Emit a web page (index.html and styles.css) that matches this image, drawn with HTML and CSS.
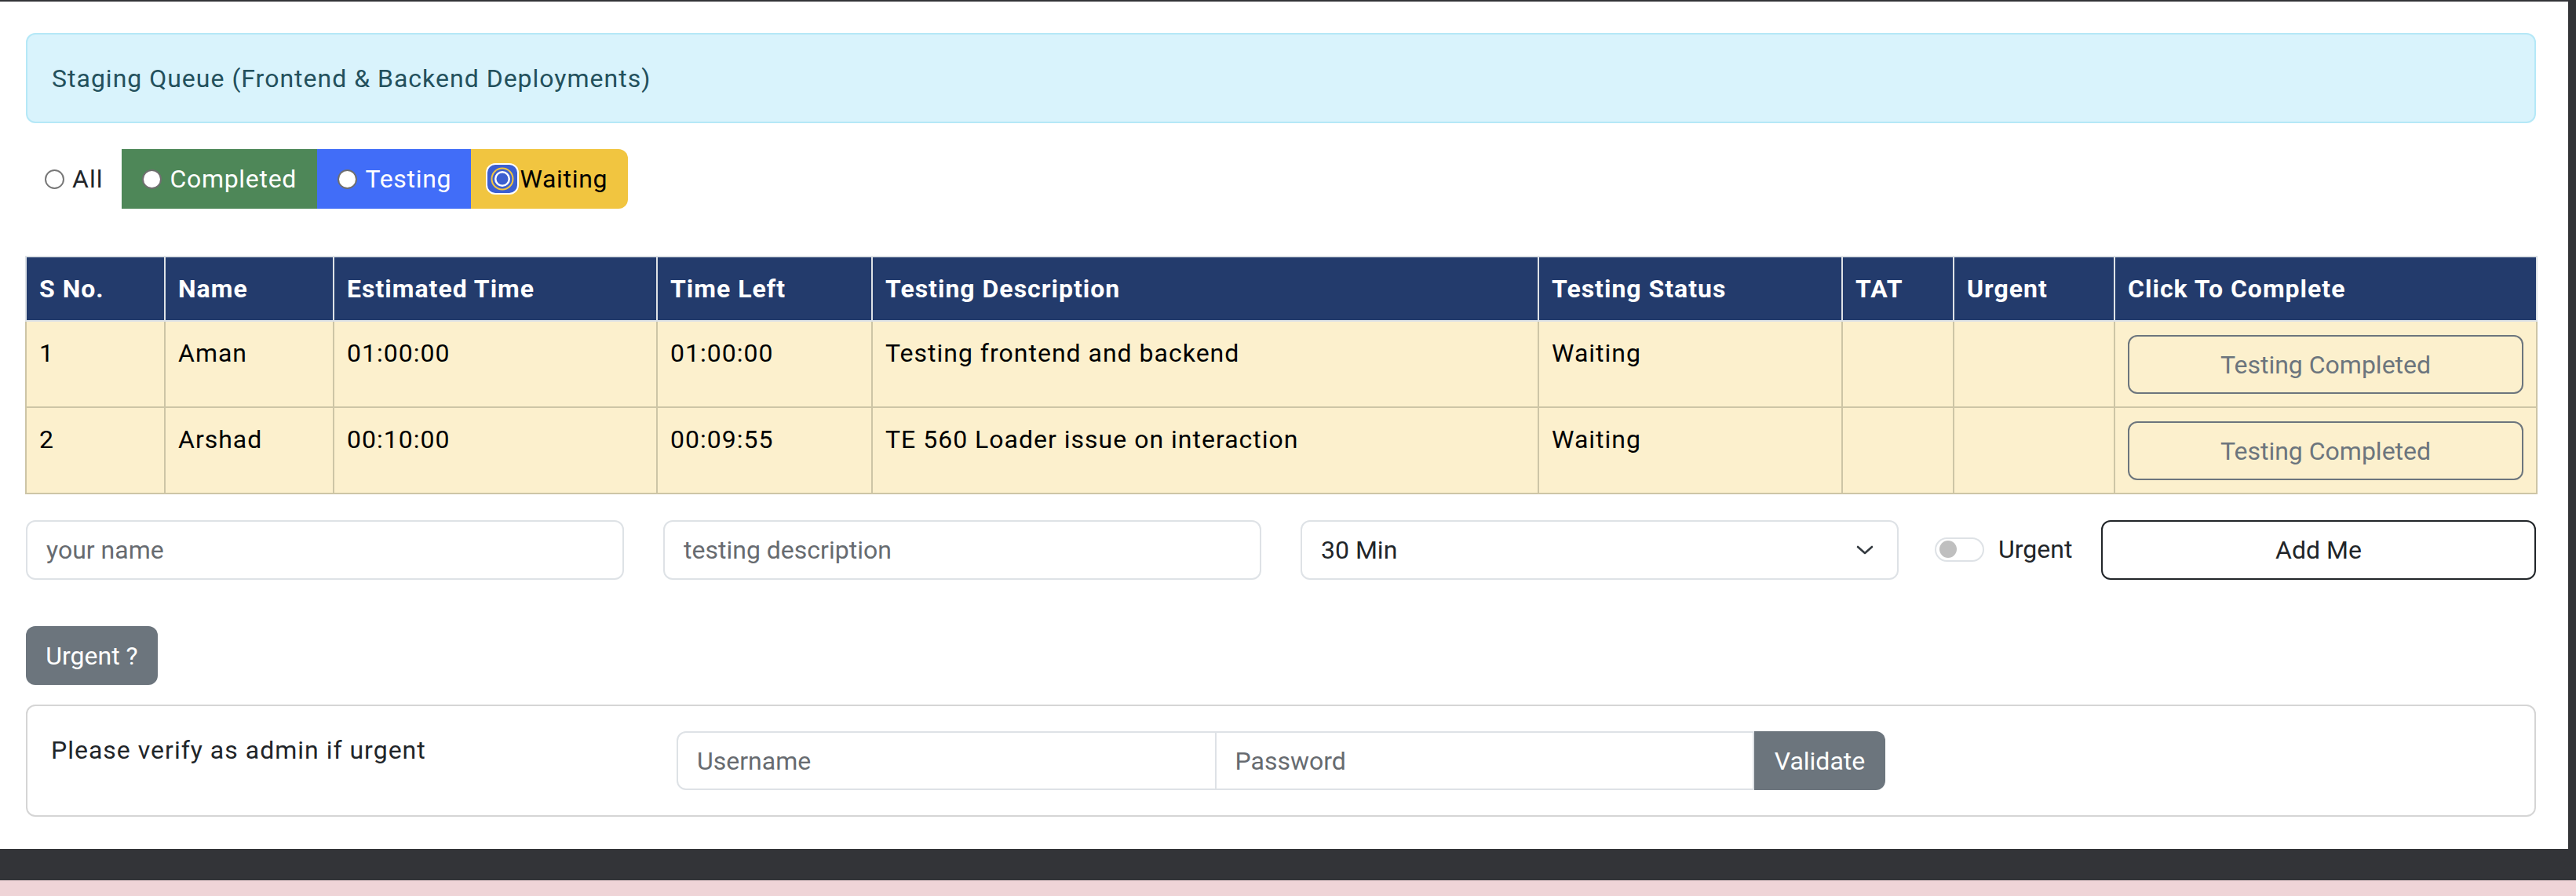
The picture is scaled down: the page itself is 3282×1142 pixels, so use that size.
FILE: index.html
```html
<!DOCTYPE html>
<html lang="en">
<head>
<meta charset="utf-8">
<title>Staging Queue</title>
<link rel="stylesheet" href="styles.css">
</head>
<body>
<div class="screen">
  <div class="page">
    <div class="alert">Staging Queue (Frontend &amp; Backend Deployments)</div>

    <div class="filters">
      <label class="opt opt-all"><span class="radio"></span>All</label>
      <label class="opt opt-completed"><span class="radio filled"></span>Completed</label>
      <label class="opt opt-testing"><span class="radio filled"></span>Testing</label>
      <label class="opt opt-waiting"><svg class="radio-checked" width="42" height="40" viewBox="0 0 42 40"><rect x="0" y="0" width="42" height="40" rx="12" fill="#ffffff"/><rect x="2" y="2" width="38" height="36" rx="10" fill="#3c5fd0"/><circle cx="21" cy="20" r="14.5" fill="#f1c540"/><circle cx="21" cy="20" r="12.5" fill="#3c5fd0"/><circle cx="21" cy="20" r="10" fill="#ffffff"/><circle cx="21" cy="20" r="7.5" fill="#3c5fd0"/></svg>Waiting</label>
    </div>

    <table class="queue">
      <colgroup>
        <col class="c-sno"><col class="c-name"><col class="c-est"><col class="c-left"><col class="c-desc"><col class="c-status"><col class="c-tat"><col class="c-urgent"><col class="c-action">
      </colgroup>
      <thead>
        <tr>
          <th>S No.</th><th>Name</th><th>Estimated Time</th><th>Time Left</th><th>Testing Description</th><th>Testing Status</th><th>TAT</th><th>Urgent</th><th>Click To Complete</th>
        </tr>
      </thead>
      <tbody>
        <tr>
          <td>1</td><td>Aman</td><td>01:00:00</td><td>01:00:00</td><td>Testing frontend and backend</td><td>Waiting</td><td></td><td></td>
          <td><button class="btn-complete">Testing Completed</button></td>
        </tr>
        <tr>
          <td>2</td><td>Arshad</td><td>00:10:00</td><td>00:09:55</td><td>TE 560 Loader issue on interaction</td><td>Waiting</td><td></td><td></td>
          <td><button class="btn-complete">Testing Completed</button></td>
        </tr>
      </tbody>
    </table>

    <div class="entry">
      <input class="field" type="text" placeholder="your name">
      <input class="field" type="text" placeholder="testing description">
      <div class="field select"><span>30 Min</span><svg width="22" height="12" viewBox="0 0 22 12"><polyline points="2,2 11,10 20,2" fill="none" stroke="#343a40" stroke-width="2.6" stroke-linecap="round" stroke-linejoin="round"/></svg></div>
      <div class="entry-last">
        <label class="switch-wrap"><span class="switch"><span class="knob"></span></span>Urgent</label>
        <button class="btn-add">Add Me</button>
      </div>
    </div>

    <button class="btn-urgent">Urgent ?</button>

    <div class="verify">
      <div class="verify-text">Please verify as admin if urgent</div>
      <div class="input-group">
        <input class="ig-field ig-first" type="text" placeholder="Username">
        <input class="ig-field" type="password" placeholder="Password">
        <button class="btn-validate">Validate</button>
      </div>
    </div>
  </div>
  <div class="pink-strip"></div>
</div>
</body>
</html>
```

FILE: styles.css
```css
* { box-sizing: border-box; }

html, body {
  margin: 0;
  padding: 0;
}

body {
  background: #333438;
  font-family: Roboto, "Liberation Sans", Arial, sans-serif;
  font-size: 32px;
  line-height: 48px;
  letter-spacing: 1px;
  color: #212529;
  width: 3282px;
  height: 1142px;
  overflow: hidden;
}

.screen {
  width: 3282px;
  height: 1142px;
  padding-top: 2px;
}

.page {
  width: 3272px;
  height: 1080px;
  background: #ffffff;
  padding: 40px 41px 0 33px;
}

.pink-strip {
  margin-top: 40px;
  height: 20px;
  background: #efd4d7;
}

/* Alert */
.alert {
  height: 115px;
  background: #d9f3fc;
  border: 2px solid #b5e8f7;
  border-radius: 12px;
  color: #23505c;
  padding: 0 31px;
  display: flex;
  align-items: center;
}

/* Filters */
.filters {
  margin-top: 33px;
  height: 76px;
  display: flex;
  align-items: stretch;
}

.opt {
  display: flex;
  align-items: center;
  gap: 10px;
  padding: 0 26px;
  white-space: nowrap;
}

.opt-all {
  padding: 0 24px 0 24px;
  color: #212529;
}

.opt-completed {
  background: #4e8758;
  color: #ffffff;
  width: 249px;
  letter-spacing: 0.7px;
}

.opt-testing {
  background: #416df8;
  color: #ffffff;
  width: 196px;
  letter-spacing: 0.7px;
}

.opt-waiting {
  background: #f1c540;
  color: #000000;
  width: 200px;
  border-radius: 0 12px 12px 0;
  padding-left: 19px;
  gap: 1px;
  letter-spacing: 0.7px;
}

.radio {
  width: 25px;
  height: 25px;
  border-radius: 50%;
  border: 2px solid #777777;
  background: #ffffff;
  flex: none;
}

.radio.filled {
  border-color: #6f6f6f;
}

.radio-checked {
  flex: none;
  display: block;
}

/* Table */
.queue {
  margin-top: 60px;
  margin-left: -1px;
  width: 3199px;
  border-collapse: collapse;
  table-layout: fixed;
}

.c-sno { width: 177px; }
.c-name { width: 215px; }
.c-est { width: 412px; }
.c-left { width: 274px; }
.c-desc { width: 849px; }
.c-status { width: 387px; }
.c-tat { width: 142px; }
.c-urgent { width: 205px; }
.c-action { width: 538px; }

.queue th {
  background: #233b6c;
  color: #ffffff;
  font-weight: 700;
  text-align: left;
  padding: 16px 16px;
  height: 80px;
  border: 2px solid #dee2e6;
  line-height: 48px;
  white-space: nowrap;
}

.queue td {
  background: #fcf0cd;
  color: #000000;
  padding: 16px 16px;
  vertical-align: top;
  border: 2px solid #cdc5a6;
  line-height: 48px;
  height: 110px;
}

.btn-complete {
  display: block;
  width: 100%;
  height: 75px;
  margin-top: 1px;
  background: transparent;
  border: 2px solid #6c757d;
  border-radius: 12px;
  color: #6c757d;
  font-family: Roboto, "Liberation Sans", Arial, sans-serif;
  font-size: 32px;
  letter-spacing: 0;
}

/* Entry row */
.entry {
  margin-top: 33px;
  display: grid;
  grid-template-columns: repeat(4, 1fr);
  column-gap: 50px;
  height: 76px;
}

.field {
  height: 76px;
  border: 2px solid #dee2e6;
  border-radius: 12px;
  padding: 0 24px;
  font-family: Roboto, "Liberation Sans", Arial, sans-serif;
  font-size: 32px;
  letter-spacing: 0;
  color: #212529;
  background: #ffffff;
  outline: none;
  width: 100%;
}

.field::placeholder,
.ig-field::placeholder {
  color: #676b70;
}

.select {
  display: flex;
  align-items: center;
  justify-content: space-between;
  padding-right: 30px;
}

.entry-last {
  display: flex;
  align-items: center;
  margin-left: -4px;
}

.switch-wrap {
  display: flex;
  align-items: center;
  gap: 18px;
  color: #212529;
  letter-spacing: 0;
  margin-top: -2px;
}

.switch {
  width: 63px;
  height: 31px;
  border: 2px solid #dee2e6;
  border-radius: 16px;
  display: flex;
  align-items: center;
  padding-left: 4px;
}

.knob {
  width: 22px;
  height: 22px;
  border-radius: 50%;
  background: #bfbfbf;
}

.btn-add {
  margin-left: auto;
  width: 554px;
  height: 76px;
  background: #ffffff;
  border: 2px solid #212529;
  border-radius: 12px;
  color: #212529;
  font-family: Roboto, "Liberation Sans", Arial, sans-serif;
  font-size: 32px;
  letter-spacing: 0;
}

/* Urgent button */
.btn-urgent {
  display: block;
  margin-top: 59px;
  width: 168px;
  height: 75px;
  background: #6c757d;
  border: none;
  border-radius: 12px;
  color: #ffffff;
  font-family: Roboto, "Liberation Sans", Arial, sans-serif;
  font-size: 32px;
  letter-spacing: 0;
  padding: 0;
}

/* Verify card */
.verify {
  margin-top: 25px;
  height: 143px;
  border: 2px solid #d5d5d5;
  border-radius: 12px;
  padding: 32px 32px 32px 30px;
  display: grid;
  grid-template-columns: repeat(4, 1fr);
  column-gap: 48px;
  align-items: start;
}

.verify-text {
  color: #212529;
}

.input-group {
  grid-column: 2 / span 2;
  display: flex;
  height: 75px;
  margin-left: 2px;
}

.ig-field {
  flex: 1;
  min-width: 0;
  height: 75px;
  border: 2px solid #dee2e6;
  padding: 0 24px;
  font-family: Roboto, "Liberation Sans", Arial, sans-serif;
  font-size: 32px;
  letter-spacing: 0;
  background: #ffffff;
  outline: none;
  margin-left: -2px;
}

.ig-first {
  border-radius: 12px 0 0 12px;
  margin-left: 0;
}

.btn-validate {
  width: 167px;
  height: 75px;
  background: #6c757d;
  border: none;
  border-radius: 0 12px 12px 0;
  color: #ffffff;
  font-family: Roboto, "Liberation Sans", Arial, sans-serif;
  font-size: 32px;
  letter-spacing: 0;
  padding: 0;
}
```
